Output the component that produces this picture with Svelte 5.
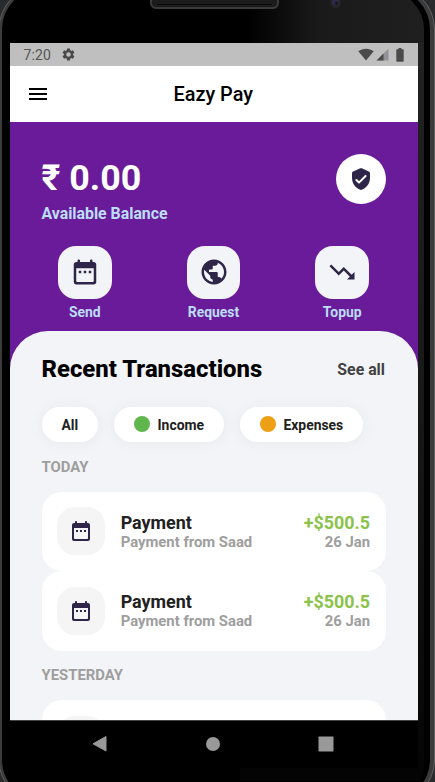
<script>
  const calendar = 'M19 4h-1V3c0-.55-.45-1-1-1s-1 .45-1 1v1H8V3c0-.55-.45-1-1-1s-1 .45-1 1v1H5c-1.11 0-1.99.9-1.99 2L3 20c0 1.1.89 2 2 2h14c1.1 0 2-.9 2-2V6c0-1.1-.9-2-2-2zm0 15c0 .55-.45 1-1 1H6c-.55 0-1-.45-1-1V9h14v10zM7 11h2v2H7zm4 0h2v2h-2zm4 0h2v2h-2z';
  const globe = 'M12 2C6.48 2 2 6.48 2 12s4.48 10 10 10 10-4.48 10-10S17.52 2 12 2zm-1 17.93c-3.95-.49-7-3.85-7-7.93 0-.62.08-1.21.21-1.79L9 15v1c0 1.1.9 2 2 2v1.93zm6.9-2.54c-.26-.81-1-1.39-1.9-1.39h-1v-3c0-.55-.45-1-1-1H8v-2h2c.55 0 1-.45 1-1V7h2c1.1 0 2-.9 2-2v-.41c2.93 1.19 5 4.06 5 7.41 0 2.08-.8 3.97-2.1 5.39z';
  const trend = 'M16 18l2.29-2.29-4.88-4.88-4 4L2 7.41 3.41 6l6 6 4-4 6.3 6.29L22 12v6z';
  const actions = [
    { label: 'Send', icon: calendar },
    { label: 'Request', icon: globe },
    { label: 'Topup', icon: trend }
  ];
  const payment = { title: 'Payment', note: 'Payment from Saad', amount: '+$500.5', date: '26 Jan' };
  const groups = [
    { day: 'TODAY', items: [payment, payment] },
    { day: 'YESTERDAY', items: [null] }
  ];
</script>

<div class="device">
  <svg class="bezel" width="435" height="782" viewBox="0 0 435 782" aria-hidden="true">
    <defs>
      <linearGradient id="face" x1="0" y1="0" x2="1" y2="0">
        <stop offset="0" stop-color="#000" />
        <stop offset=".58" stop-color="#000" />
        <stop offset=".75" stop-color="#1a1a1a" />
        <stop offset="1" stop-color="#1f1f1f" />
      </linearGradient>
      <linearGradient id="side" x1="0" y1="0" x2="0" y2="1">
        <stop offset="0" stop-color="#222" />
        <stop offset=".5" stop-color="#181818" />
        <stop offset="1" stop-color="#050505" />
      </linearGradient>
    </defs>
    <rect width="435" height="782" fill="#292a2c" />
    <rect x="-1" y="-14" width="435.5" height="817" rx="43" fill="#3b3b3b" stroke="#606060" />
    <rect x="2" y="-11" width="428" height="811" rx="40" fill="#000" />
    <rect x="3" y="-9" width="421" height="807" rx="38" fill="url(#face)" />
    <rect x="2" y="43" width="9" height="700" fill="#000" />
    <rect x="418" y="43" width="6" height="725" fill="url(#side)" />
    <path d="M3 720h415v48h6l-1 7-3 7H9l-5-12z" fill="#000" />
    <path d="M240 768h184l-1 6-3 7H240z" fill="#040404" />
    <rect x="151" y="-12" width="127" height="20" rx="5" fill="#1c1c1c" stroke="#3b3b3b" stroke-width="2" />
    <path d="M157 4.500h115" stroke="#080808" />
    <circle cx="335.500" cy="2.500" r="5.500" fill="#252525" />
    <circle cx="335.500" cy="2" r="3.500" fill="#30284b" />
    <circle cx="336.500" cy="3" r="1.500" fill="#17131f" />
  </svg>

  <main class="screen">
    <div class="status">
      <span class="clock">7:20</span>
      <svg class="gear" width="15" height="15" viewBox="0 0 24 24"><path d="M19.140 12.940c.04-.3.060-.610.060-.940s-.020-.640-.070-.940l2.030-1.580c.180-.140.230-.410.120-.610l-1.920-3.320c-.120-.220-.370-.290-.590-.220l-2.390.960c-.500-.380-1.030-.700-1.620-.940L14.400 2.810c-.040-.240-.240-.410-.480-.410h-3.840c-.240 0-.430.170-.470.410l-.360 2.540c-.590.240-1.130.570-1.620.940l-2.390-.960c-.220-.080-.470 0-.590.220L2.740 8.870c-.120.210-.080.470.120.610l2.030 1.580c-.050.300-.090.630-.090.940s.020.640.070.940l-2.030 1.580c-.180.140-.230.410-.120.610l1.920 3.320c.120.220.370.290.590.220l2.390-.960c.500.380 1.030.700 1.620.940l.360 2.540c.050.240.240.410.480.410h3.840c.240 0 .440-.170.470-.410l.360-2.540c.590-.240 1.130-.560 1.620-.940l2.390.960c.220.080.470 0 .590-.220l1.920-3.320c.120-.220.070-.470-.120-.610l-2.010-1.580zM12 15.600a3.600 3.600 0 1 1 0-7.200 3.600 3.600 0 0 1 0 7.200z" /></svg>
      <span class="spacer"></span>
      <svg width="16" height="13" viewBox="0 0 16 13"><path d="M.3 3.200C4.800-.2 11.200-.2 15.700 3.200L8 12.500z" /></svg>
      <svg class="signal" width="13" height="13" viewBox="0 0 13 13"><path d="M12.500.5v12H.5z" fill="#93919a" /><path d="M7.500 5.500v7H.5z" /></svg>
      <svg class="battery" width="8" height="14" viewBox="0 0 8 14"><path d="M2.500 0h3v1.300H7q.7 0 .7.700v11q0 .7-.7.700H1q-.7 0-.7-.7V2q0-.7.700-.7h1.500z" /></svg>
    </div>

    <header>
      <svg class="menu" width="24" height="24" viewBox="0 0 24 24"><path d="M3 18h18v-2H3v2zm0-5h18v-2H3v2zm0-7v2h18V6H3z" /></svg>
      <h1>Eazy Pay</h1>
    </header>

    <section class="hero">
      <div class="balance">
        <div>
          <div class="amount">₹ 0.00</div>
          <div class="caption">Available Balance</div>
        </div>
        <div class="shield">
          <svg width="24" height="24" viewBox="0 0 24 24"><path d="M11.190 1.360l-7 3.110C3.470 4.790 3 5.510 3 6.300V11c0 5.550 3.840 10.740 9 12 5.160-1.260 9-6.450 9-12V6.300c0-.790-.470-1.510-1.190-1.830l-7-3.110c-.510-.230-1.110-.230-1.620 0zm-1.900 14.930L6.700 13.700a.996.996 0 1 1 1.410-1.410L10 14.170l5.880-5.880a.996.996 0 1 1 1.410 1.410l-6.590 6.590c-.380.390-1.020.390-1.410 0z" /></svg>
        </div>
      </div>
      <div class="actions">
        {#each actions as action}
          <div class="action">
            <div class="tile"><svg width="30" height="30" viewBox="0 0 24 24"><path d={action.icon} /></svg></div>
            <span>{action.label}</span>
          </div>
        {/each}
      </div>
    </section>

    <section class="sheet">
      <div class="heading"><h2>Recent Transactions</h2><span>See all</span></div>
      <div class="chips">
        <div class="chip"><span>All</span></div>
        <div class="chip"><i class="green"></i><span>Income</span></div>
        <div class="chip"><i class="orange"></i><span>Expenses</span></div>
      </div>
      {#each groups as group}
        <h3>{group.day}</h3>
        <div class="list">
          {#each group.items as item}
            <article>
              <div class="thumb"><svg width="24" height="24" viewBox="0 0 24 24"><path d={calendar} /></svg></div>
              {#if item}
                <div class="info"><strong>{item.title}</strong><small>{item.note}</small></div>
                <div class="value"><strong>{item.amount}</strong><small>{item.date}</small></div>
              {/if}
            </article>
          {/each}
        </div>
      {/each}
    </section>
  </main>

  <nav>
    <svg width="16" height="18" viewBox="0 0 16 18"><path d="M14 1.500v14.500L1 8.800z" stroke-width="1" stroke="#999" stroke-linejoin="round" /></svg>
    <svg width="16" height="18" viewBox="0 0 16 18"><circle cx="8" cy="9" r="7" /></svg>
    <svg width="16" height="18" viewBox="0 0 16 18"><rect x=".5" y="1.500" width="15" height="15" rx=".8" /></svg>
  </nav>
</div>

<style>
  :global(body) { margin: 0; overflow: hidden; background: #292a2c; }
  .device { position: relative; width: 435px; height: 782px; overflow: hidden; box-sizing: border-box; padding: 43px 17px 0 10px; font-family: Roboto, "Noto Sans", sans-serif; }
  .bezel { position: absolute; inset: 0; }
  svg { display: block; flex: none; }
  .screen { position: relative; height: 677px; overflow: hidden; display: flex; flex-direction: column; background: #6a1b9a; }
  .status { height: 23px; flex: none; display: flex; align-items: center; box-sizing: border-box; padding: 0 14.500px 0 13.500px; background: #bfbfbf; fill: #4a4a4a; color: #555; }
  .clock { font-size: 14px; line-height: 23px; letter-spacing: .1px; padding-top: 1px; width: 37.500px; }
  .gear { margin-top: -1px; }
  .spacer { flex: 1; }
  .signal { margin-left: 2px; }
  .battery { margin-left: 7px; }
  header { position: relative; height: 56px; flex: none; background: #fff; display: flex; align-items: center; justify-content: center; }
  .menu { position: absolute; left: 15.500px; top: 16px; }
  h1, h2, h3 { margin: 0; }
  h1 { font-size: 19.900px; line-height: 24px; font-weight: 500; color: #000; padding-top: 2px; margin-left: -1.500px; }
  .hero { height: 209px; flex: none; box-sizing: border-box; padding: 31px 32px 0 31.500px; }
  .balance { display: flex; justify-content: space-between; }
  .amount { color: #fff; font-size: 35.800px; line-height: 42px; font-weight: 700; padding-top: 4px; }
  .caption { color: #bbdefb; font-size: 15.850px; line-height: 19px; font-weight: 700; padding-top: 4.500px; }
  .shield { width: 50px; height: 50px; margin-top: .5px; border-radius: 50%; background: #fff; display: flex; align-items: center; justify-content: center; fill: #2e2548; }
  .actions { display: flex; justify-content: space-between; padding: 23px 17px 0 16.500px; }
  .action { width: 53.600px; display: flex; flex-direction: column; align-items: center; color: #bbdefb; font-size: 13.900px; line-height: 16px; font-weight: 700; gap: 4.500px; }
  .tile { width: 53.600px; height: 53.500px; border-radius: 18px; background: #f3f4f7; display: flex; align-items: center; justify-content: center; fill: #2e2548; }
  .sheet { flex: 1; min-height: 0; border-radius: 38px 38px 0 0; background: #f3f4f7; padding: 24px 32px 0 31.500px; display: flex; flex-direction: column; }
  .heading { height: 28px; flex: none; display: flex; justify-content: space-between; align-items: center; font-size: 15.850px; font-weight: 700; color: #424242; padding-right: 1px; }
  h2 { font-size: 23.900px; line-height: 28px; font-weight: 800; color: #000; }
  .chips { display: flex; flex: none; gap: 15.900px; margin: 23.500px 0 0; }
  .chip { height: 35.500px; border-radius: 18px; padding: 0 19.900px; display: flex; align-items: center; gap: 7.800px; background: #fff; color: #212121; font-size: 13.900px; font-weight: 700; box-shadow: 0 1px 10px 4px rgba(100, 110, 130, .045); }
  .chip span { padding-top: 1px; }
  .chip i { width: 16px; height: 16px; border-radius: 50%; }
  .green { background: #5fb64d; }
  .orange { background: #eda015; }
  h3 { font-size: 14.850px; line-height: 18px; font-weight: 700; color: #9e9e9e; padding: 15.500px 0 16px; flex: none; }
  article { height: 79.500px; box-sizing: border-box; border-radius: 20px; background: #fff; padding: 0 16px 0 15.700px; display: flex; align-items: center; }
  .thumb { width: 48px; height: 48px; border-radius: 18px; background: #f5f5f5; display: flex; align-items: center; justify-content: center; fill: #2e2548; }
  .info { margin-left: 15.500px; flex: 1; }
  .info, .value { padding-top: 1px; }
  .value { text-align: right; }
  strong, small { display: block; }
  strong { font-size: 17.900px; line-height: 20px; font-weight: 700; color: #212121; }
  small { font-size: 14.850px; line-height: 18px; font-weight: 700; color: #9e9e9e; }
  .value strong { color: #8bc34a; }
  nav { position: relative; height: 47px; width: 408px; box-sizing: border-box; border-top: 1px solid #444; display: flex; justify-content: space-between; align-items: center; padding: 0 84px 0 82px; fill: #999; background: #000; }
</style>
